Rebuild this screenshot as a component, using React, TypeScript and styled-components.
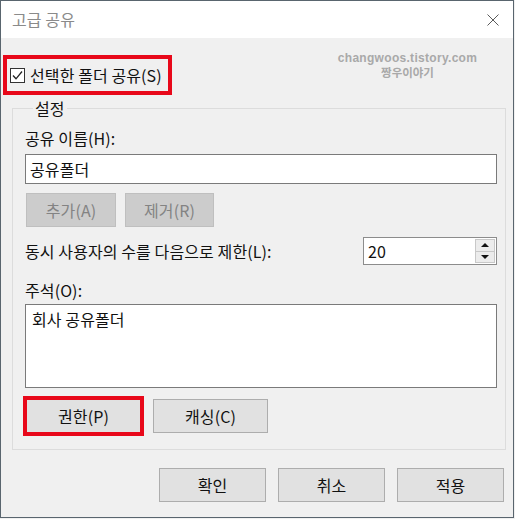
import React from "react";
import styled, { createGlobalStyle } from "styled-components";

const Global = createGlobalStyle`
  html, body { margin: 0; padding: 0; background: #f0f0f0; }
  body { font-family: "Noto Sans CJK KR", "Noto Sans", sans-serif; }
  * { box-sizing: border-box; }
`;

const Window = styled.div`
  width: 514px;
  height: 518px;
  border: 1px solid #59656e;
  background: #f0f0f0;
  display: flex;
  flex-direction: column;
  position: relative;
  font-family: "Noto Sans CJK KR", "Noto Sans", sans-serif;
  font-size: 16px;
  letter-spacing: 0.1px;
  color: #111;
`;

const TitleBar = styled.div`
  height: 37px;
  background: #ffffff;
  display: flex;
  align-items: center;
  justify-content: space-between;
  padding: 0 14px 0 11px;
`;

const Title = styled.div`
  font-size: 16px;
  line-height: 20px;
  color: #8a8a8a;
  margin-top: -1px;
`;

const Body = styled.div`
  flex: 1;
  display: flex;
  flex-direction: column;
  align-items: flex-start;
  padding-top: 17px;
`;

const Highlight = styled.label`
  display: inline-flex;
  align-items: center;
  gap: 5px;
  height: 40px;
  margin-left: 2px;
  padding: 0 6px 0 3px;
  border: 4px solid #e8081a;
  line-height: 20px;
  color: #111;
`;

const CheckBox = styled.span`
  width: 15px;
  height: 15px;
  border: 1px solid #333;
  background: #fff;
  display: inline-flex;
  align-items: center;
  justify-content: center;
`;

const Watermark = styled.div`
  position: absolute;
  left: 335px;
  top: 51px;
  width: 143px;
  display: flex;
  flex-direction: column;
  align-items: center;
  gap: 1px;
  color: #a9a9a9;
  font-weight: 700;
  letter-spacing: 0;
`;

const WatermarkUrl = styled.div`
  font-family: "Liberation Sans", Arial, sans-serif;
  font-size: 12px;
  line-height: 13px;
  letter-spacing: 0.3px;
`;

const WatermarkName = styled.div`
  font-family: "Noto Sans CJK KR", sans-serif;
  font-size: 11.5px;
  line-height: 12px;
`;

const Group = styled.fieldset`
  align-self: stretch;
  margin: 5px 7px 0 11px;
  padding: 12px 8px 16px 12px;
  border: 1px solid #dcdcdc;
  display: flex;
  flex-direction: column;
  min-width: 0;
`;

const Legend = styled.legend`
  padding: 0 2px;
  margin-left: 8px;
  font-size: 16px;
  line-height: 16px;
  color: #111;
`;

const Label = styled.div<{ $top?: number }>`
  line-height: 20px;
  margin-top: ${(p) => p.$top ?? 0}px;
  color: #111;
`;

const TextBox = styled.div<{ $height: number; $top: number }>`
  height: ${(p) => p.$height}px;
  margin-top: ${(p) => p.$top}px;
  border: 1px solid #7a7a7a;
  background: #fff;
  padding: ${(p) => (p.$height > 40 ? "4px 6px" : "0 4px")};
  display: flex;
  align-items: ${(p) => (p.$height > 40 ? "flex-start" : "center")};
  line-height: 20px;
  color: #111;
`;

const ButtonRow = styled.div<{ $top: number; $gap: number }>`
  display: flex;
  gap: ${(p) => p.$gap}px;
  margin-top: ${(p) => p.$top}px;
  padding-left: 1px;
`;

const Button = styled.button<{ $width: number; $highlight?: boolean }>`
  width: ${(p) => p.$width}px;
  height: 34px;
  border: 1px solid ${(p) => (p.disabled ? "#bfbfbf" : "#adadad")};
  background: ${(p) => (p.disabled ? "#cccccc" : "#e1e1e1")};
  color: ${(p) => (p.disabled ? "#838383" : "#111")};
  font-family: "Noto Sans CJK KR", "Noto Sans", sans-serif;
  font-size: 16px;
  letter-spacing: 0.1px;
  line-height: 20px;
  padding: 0;
  outline: ${(p) => (p.$highlight ? "4px solid #e8081a" : "none")};
  outline-offset: -1px;
`;

const LimitRow = styled.div`
  display: flex;
  align-items: center;
  justify-content: space-between;
  margin-top: 10px;
  height: 28px;
`;

const SpinBox = styled.div`
  width: 134px;
  height: 28px;
  border: 1px solid #8c8c8c;
  background: #fff;
  display: flex;
  align-items: stretch;
`;

const SpinValue = styled.div`
  flex: 1;
  display: flex;
  align-items: center;
  padding-left: 4px;
  line-height: 20px;
`;

const SpinButtons = styled.div`
  width: 20px;
  display: flex;
  flex-direction: column;
  margin: 1px 1px 1px 0;
`;

const SpinButton = styled.div<{ $down?: boolean }>`
  flex: 1;
  background: #ececec;
  border: 1px solid #c8c8c8;
  margin-top: ${(p) => (p.$down ? "-1px" : "0")};
  display: flex;
  align-items: center;
  justify-content: center;
  &::after {
    content: "";
    width: 0;
    height: 0;
    border-left: 4px solid transparent;
    border-right: 4px solid transparent;
    ${(p) =>
      p.$down
        ? "border-top: 4px solid #111;"
        : "border-bottom: 4px solid #111;"}
  }
`;

const Footer = styled.div`
  align-self: stretch;
  display: flex;
  justify-content: flex-end;
  gap: 12px;
  margin-top: 18px;
  padding-right: 9px;
`;

const CloseIcon = () => (
  <svg width="12" height="12" viewBox="0 0 12 12" aria-label="닫기">
    <path d="M0.5 0.5 L11.5 11.5 M11.5 0.5 L0.5 11.5" stroke="#5a5a5a" strokeWidth="1" fill="none" />
  </svg>
);

const CheckMark = () => (
  <svg width="13" height="13" viewBox="0 0 13 13">
    <path d="M2 6.5 L5 9.8 L11 2.5" stroke="#222" strokeWidth="1.3" fill="none" />
  </svg>
);

export default function App() {
  return (
    <>
      <Global />
      <Window>
        <TitleBar>
          <Title>고급 공유</Title>
          <CloseIcon />
        </TitleBar>
        <Body>
          <Highlight>
            <CheckBox>
              <CheckMark />
            </CheckBox>
            선택한 폴더 공유(S)
          </Highlight>
          <Watermark>
            <WatermarkUrl>changwoos.tistory.com</WatermarkUrl>
            <WatermarkName>짱우이야기</WatermarkName>
          </Watermark>
          <Group>
            <Legend>설정</Legend>
            <Label>공유 이름(H):</Label>
            <TextBox $height={30} $top={6}>공유폴더</TextBox>
            <ButtonRow $top={9} $gap={9}>
              <Button $width={90} disabled>추가(A)</Button>
              <Button $width={89} disabled>제거(R)</Button>
            </ButtonRow>
            <LimitRow>
              <Label>동시 사용자의 수를 다음으로 제한(L):</Label>
              <SpinBox>
                <SpinValue>20</SpinValue>
                <SpinButtons>
                  <SpinButton />
                  <SpinButton $down />
                </SpinButtons>
              </SpinBox>
            </LimitRow>
            <Label $top={15}>주석(O):</Label>
            <TextBox $height={84} $top={4}>회사 공유폴더</TextBox>
            <ButtonRow $top={11} $gap={12}>
              <Button $width={115} $highlight>권한(P)</Button>
              <Button $width={115}>캐싱(C)</Button>
            </ButtonRow>
          </Group>
          <Footer>
            <Button $width={107}>확인</Button>
            <Button $width={107}>취소</Button>
            <Button $width={107}>적용</Button>
          </Footer>
        </Body>
      </Window>
    </>
  );
}
